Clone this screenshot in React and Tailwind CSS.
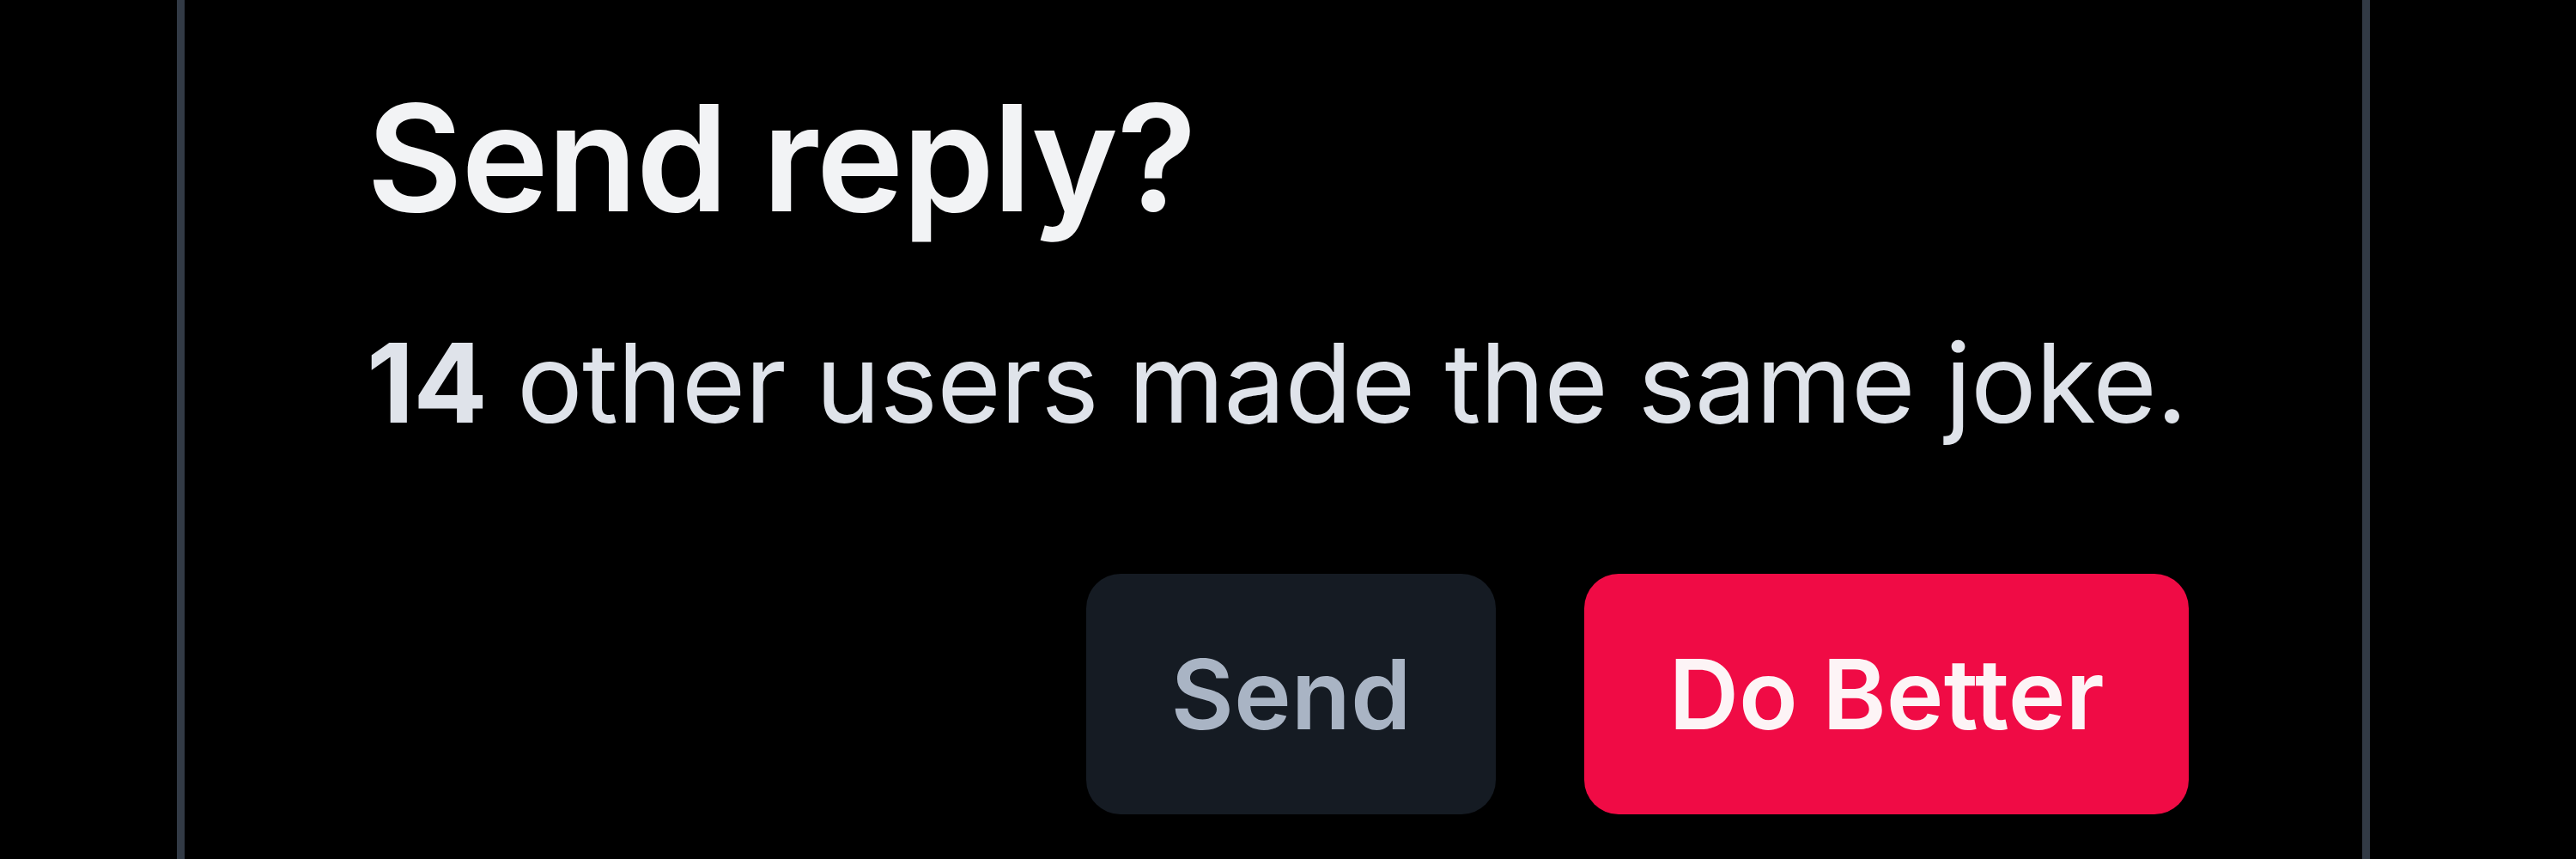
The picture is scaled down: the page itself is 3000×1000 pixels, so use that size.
import React from "react";

// Confirm dialog: "Send reply?"
const App = () => {
  return (
    <div
      className="w-full h-[1000px] bg-black overflow-hidden"
      style={{ fontFamily: "Inter, 'Noto Sans', sans-serif" }}
    >
      <div className="ml-[206px] w-[2554px] h-full border-x-[9px] border-[#323a45] pl-[212px] pr-[202px] pt-[97px]">
        <h1 className="text-[172px] leading-none font-semibold text-[#f2f3f5] tracking-[-0.01em]">
          Send reply?
        </h1>
        <p className="mt-[113px] text-[128px] leading-none text-[#dfe3ea] whitespace-nowrap tracking-[-0.007em]">
          <span className="font-bold">14</span> other users made the same joke.
        </p>
        <div className="mt-[158px] flex justify-end gap-[103px]">
          <button className="w-[477px] h-[280px] rounded-[40px] bg-[#151b23] text-[#a9b4c4] text-[113px] leading-none font-semibold flex items-center justify-center">
            Send
          </button>
          <button className="w-[704px] h-[280px] rounded-[40px] bg-[#f00b45] text-[#fdf4f6] text-[113px] leading-none font-semibold flex items-center justify-center">
            Do Better
          </button>
        </div>
      </div>
    </div>
  );
};

export default App;
